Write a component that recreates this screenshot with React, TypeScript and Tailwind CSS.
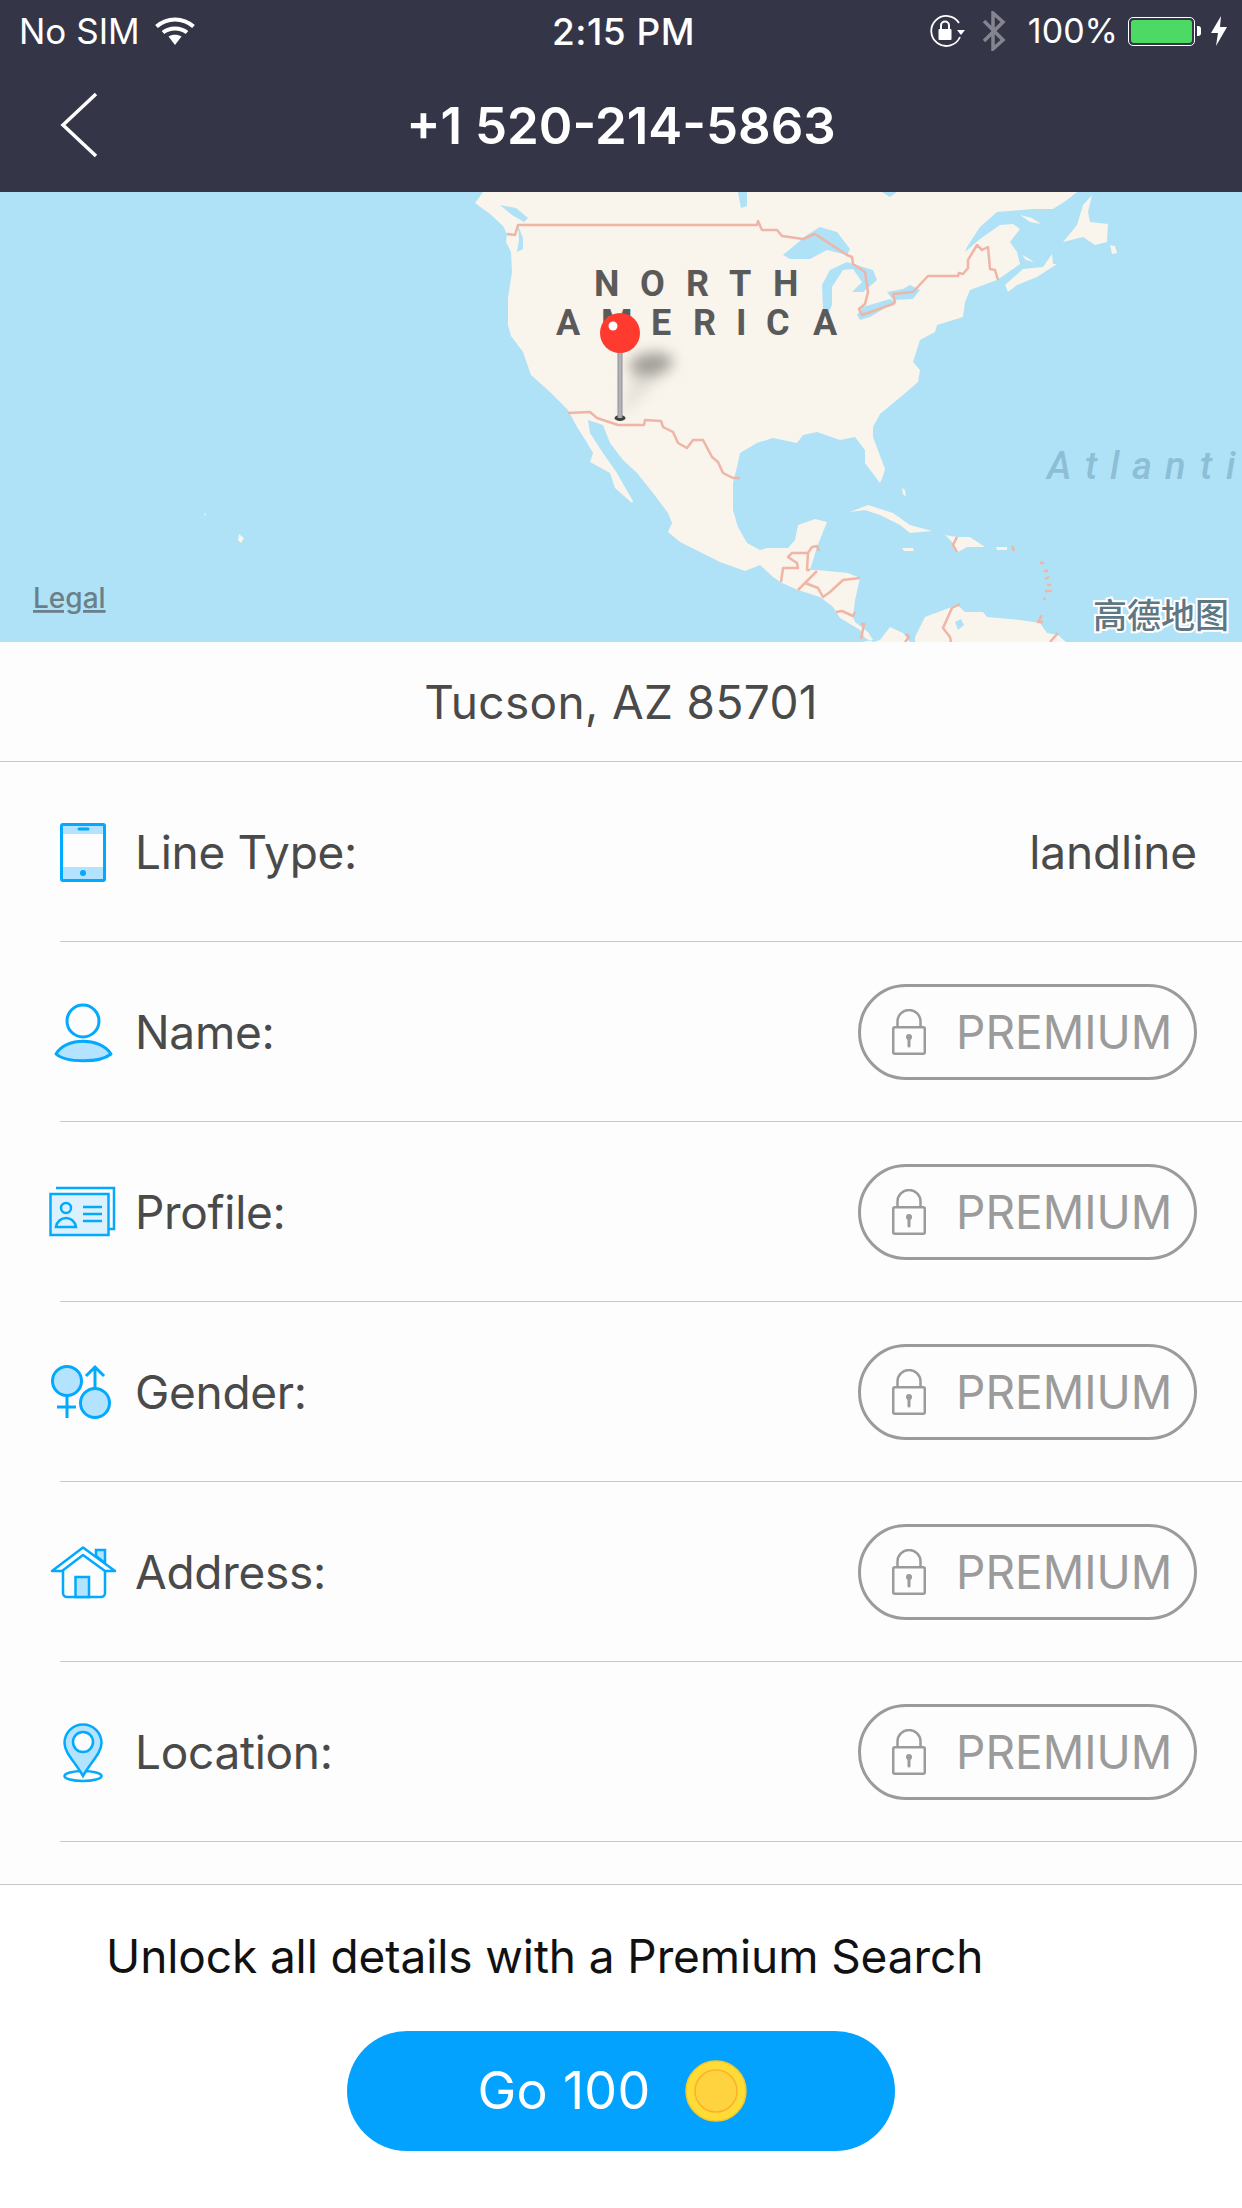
import React from 'react';

const BLUE = '#03a9fd';
const LIGHT = '#b3e3ff';

const land = [
  // mainland, clockwise from the north west
  '483,192 475,203 490,214 503,226 507,234 506,242 511,252 512,272 508,298 508,325 511,336 523,352 531,375 550,392 568,410 577,427 586,441 593,453 590,462 610,473 615,488 632,503 633,501 622,482 617,473 603,453 590,433 588,420 603,425 610,443 623,460 637,473 653,493 668,513 672,523 668,532 680,542 700,552 720,562 745,571 760,565 773,577 782,583 798,590 820,597 833,607 840,618 860,630 865,638 873,642 880,640 890,627 903,633 910,642 915,642 915,637 925,617 957,605 965,612 983,612 987,617 1020,620 1040,623 1047,633 1058,635 1066,642 1242,642 1242,660 760,660 873,640 868,632 855,622 853,617 855,600 860,578 848,573 817,570 810,570 817,547 827,522 815,519 798,525 795,540 788,548 767,548 760,550 747,543 738,527 733,510 733,483 737,467 740,453 757,443 773,438 797,443 803,435 817,432 840,440 855,437 865,450 865,463 880,483 883,476 885,469 873,437 873,427 880,414 903,395 918,382 920,370 913,362 920,340 935,332 937,325 963,317 965,302 970,290 997,280 1020,264 1017,252 1010,242 1020,229 1013,224 1000,225 980,239 965,252 967,247 980,227 997,212 1033,209 1053,209 1067,200 1077,192',
  // Nova Scotia
  '1008,292 1005,285 1023,269 1043,267 1052,254 1053,264 1057,264 1037,277 1017,285',
  '1022,255 1028,258 1034,262 1026,260',
  // Newfoundland and small islands
  '1063,242 1077,225 1083,205 1092,195 1088,212 1090,222 1108,224 1107,242 1095,245 1083,237',
  '1110,245 1115,246 1117,253 1112,254',
  '1020,215 1032,218 1041,224 1030,222',
  // Cuba, Hispaniola, Jamaica, Puerto Rico
  '850,512 868,505 893,513 910,525 932,531 910,533 900,525 880,515 865,510',
  '945,535 957,537 970,537 985,547 967,547 958,552 953,543',
  '902,548 913,548 914,551 904,551',
  '996,547 1007,547 1007,550 997,550',
  '902,488 905,490 906,497 903,494',
  // Hawaii
  '239,534 244,538 241,543 238,540',
  '204,513 206,514 205,516',
];

const lakes = [
  '783,255 807,235 820,227 837,232 850,249 847,255 827,250 810,259 790,259',
  '823,309 822,285 830,270 847,262 863,267 873,270 877,280 863,292 852,292 862,282 853,269 843,270 832,287 832,305 828,314',
  '857,315 863,307 890,299 895,302 870,317 860,320',
  '887,292 903,289 910,285 920,290 913,299 893,300',
  '738,192 747,192 747,206 741,208',
  '882,192 897,192 890,197',
  '518,225 523,238 523,249 517,252 519,240',
  '500,205 512,215 524,222 528,218 516,208',
  '955,622 961,619 964,625 958,630',
];

const borders = [
  '507,234 515,235 518,225 757,225 758,221 762,230 777,230 782,236 803,239 815,234 847,255 852,257 853,264 865,272 868,292 865,304 859,309 862,315 893,304 895,302 893,294 913,292 928,276 958,276 959,273 963,274 968,268 968,260 977,245 982,250 988,247 990,269 995,270 998,280',
  '568,413 590,412 597,418 618,425 644,425 645,420 661,421 663,427 673,432 678,443 687,448 693,440 703,440 712,457 718,462 723,473 733,478 740,478',
  '781,582 783,568 798,568 797,563 788,557 792,553 808,553 807,570 810,570',
  '808,553 812,547 817,546 819,551',
  '798,590 805,583 817,571',
  '805,583 818,588 823,597 830,592 843,580 860,578',
  '836,612 842,611 853,616 855,612',
  '861,624 864,624 861,639',
  '905,642 909,637 906,634',
  '960,604 952,608 943,628 950,637 951,642',
  '1042,615 1038,622 1043,622',
  '1050,642 1058,633',
  '957,537 953,545 957,552',
  '1012,546 1014,551',
  '1040,563 1044,563',
  '1044,571 1048,571',
  '1045,579 1049,577',
  '1047,585 1051,585',
  '1045,591 1052,591',
  '1043,599 1046,599',
];

function MapView() {
  return (
    <svg viewBox="0 192 1242 450" className="block h-[450px] w-full bg-[#afe2f7]">
      <defs>
        <filter id="pin-blur" x="-50%" y="-50%" width="200%" height="200%">
          <feGaussianBlur stdDeviation="7" />
        </filter>
        <linearGradient id="stick" x1="0" x2="1" y1="0" y2="0">
          <stop offset="0" stopColor="#8f9196" />
          <stop offset="0.5" stopColor="#b9bbc0" />
          <stop offset="1" stopColor="#8f9196" />
        </linearGradient>
      </defs>
      {land.map((p) => (
        <polygon key={p} points={p} fill="#f9f4ec" />
      ))}
      {lakes.map((p) => (
        <polygon key={p} points={p} fill="#afe2f7" />
      ))}
      {borders.map((p) => (
        <polyline key={p} points={p} fill="none" stroke="#efb5a6" strokeWidth="2.500" strokeLinejoin="round" />
      ))}

      <text
        x="594 640 686 729 773"
        y="296"
        fill="#5a5a5a"
        className="font-['Roboto',sans-serif] text-[36px] font-bold"
      >
        NORTH
      </text>
      <text
        x="556 601 651 693 736 766 813"
        y="335"
        fill="#5a5a5a"
        className="font-['Roboto',sans-serif] text-[36px] font-bold"
      >
        AMERICA
      </text>
      <text
        x="1047 1085 1110 1132 1165 1200 1226"
        y="479"
        fill="#8cbfd6"
        className="font-['Roboto',sans-serif] text-[38px] font-medium italic"
      >
        Atlanti
      </text>
      <text
        x="33"
        y="608"
        fill="#6b7f89"
        className="font-['Inter',sans-serif] text-[28px] font-medium underline"
      >
        Legal
      </text>
      <text
        x="1093"
        y="628"
        fill="#5e7785"
        stroke="#ffffff"
        strokeWidth="4"
        paintOrder="stroke"
        className="font-['Noto_Sans_CJK_SC',sans-serif] text-[34px] font-medium"
      >
        高德地图
      </text>

      <g filter="url(#pin-blur)">
        <ellipse cx="651" cy="364" rx="22" ry="11" fill="#a09e98" transform="rotate(-8 651 364)" />
        <polygon points="620,419 634,372 662,374" fill="#a09e98" opacity="0.25" />
      </g>
      <ellipse cx="620" cy="418" rx="5.5" ry="3" fill="#3f3f3f" />
      <rect x="617.5" y="350" width="5" height="68" fill="url(#stick)" />
      <circle cx="620" cy="333" r="20" fill="#ff3b30" />
      <circle cx="613" cy="326" r="4.5" fill="#ffffff" />
    </svg>
  );
}

function StatusBar() {
  return (
    <div className="grid h-[62px] grid-cols-3 items-center px-5 text-[34px] leading-none text-white">
      <div className="flex items-center gap-[15px] text-[35px]">
        <span className="-ml-[1px]">No SIM</span>
        <svg width="40" height="28" viewBox="0 0 40 28">
          <path d="M1.5 9.5C12 0 28 0 38.5 9.5" fill="none" stroke="#fff" strokeWidth="4" />
          <path d="M8 15.5C14.500 10 25.500 10 32 15.500" fill="none" stroke="#fff" strokeWidth="4" />
          <path d="M13.500 19.500C17 17 23 17 26.500 19.500L20 28Z" fill="#fff" />
        </svg>
      </div>
      <div className="-mr-[5px] text-center text-[37px] font-medium tracking-[0.5px]">2:15 PM</div>
      <div className="-mr-[5px] flex items-center justify-end">
        <svg width="36" height="32" viewBox="0 0 36 32">
          <path d="M31 22A15 15 0 1 1 30 8" fill="none" stroke="#fff" strokeWidth="1.800" />
          <path d="M28 15L36 15L32 20Z" fill="#fff" />
          <rect x="9.500" y="14" width="13" height="11" rx="1" fill="#fff" />
          <path d="M12 14V10.500A4 4 0 0 1 20 10.500V14" fill="none" stroke="#fff" strokeWidth="2" />
        </svg>
        <svg className="ml-[17px]" width="24" height="40" viewBox="0 0 24 40">
          <path d="M2 10L21 29L11 38V2L21 11L2 30" fill="none" stroke="#84858f" strokeWidth="3.500" />
        </svg>
        <span className="ml-[22px]">100%</span>
        <div className="ml-[10px] flex h-[29px] w-[67px] items-center rounded-[5px] border border-white p-[2px]">
          <div className="h-full w-full rounded-[3px] bg-[#4cd964]" />
        </div>
        <div className="ml-[2px] h-[10px] w-[4px] rounded-r-[3px] bg-white" />
        <svg className="ml-[10px]" width="16" height="30" viewBox="0 0 16 30">
          <path d="M10 0L0 17H7L5 30L16 11H9Z" fill="#fff" />
        </svg>
      </div>
    </div>
  );
}

function LockIcon() {
  return (
    <svg width="34" height="46" viewBox="0 0 34 46" fill="none" stroke="#9b9b9b" strokeWidth="2.500">
      <rect x="1.250" y="18.250" width="31.500" height="26.500" rx="1.500" />
      <path d="M5.500 18V12.500A11.500 11.500 0 0 1 28.500 12.500V18" />
      <circle cx="17" cy="28" r="3" fill="#9b9b9b" stroke="none" />
      <path d="M17 29V37" strokeWidth="3" strokeLinecap="round" />
    </svg>
  );
}

function PremiumPill() {
  return (
    <div className="flex h-[96px] w-[339px] items-center gap-[30px] rounded-full border-[3px] border-[#9b9b9b] pl-[31px]">
      <LockIcon />
      <span className="text-[46px] leading-none text-[#9b9b9b]">PREMIUM</span>
    </div>
  );
}

function TabletIcon() {
  return (
    <svg width="70" height="70" viewBox="47 816 70 70" fill="none" stroke={BLUE} strokeWidth="3">
      <rect x="62" y="823" width="42" height="10" fill={LIGHT} stroke="none" />
      <rect x="62" y="866" width="42" height="14" fill={LIGHT} stroke="none" />
      <rect x="61.500" y="823.500" width="43" height="56" rx="1.500" />
      <path d="M79 828H88" strokeLinecap="round" />
      <circle cx="83" cy="872" r="3" fill={BLUE} stroke="none" />
    </svg>
  );
}

function PersonIcon() {
  return (
    <svg width="70" height="70" viewBox="47 996 70 70" fill="none" stroke={BLUE} strokeWidth="3">
      <circle cx="83" cy="1020" r="16" />
      <path d="M56 1053C66 1036 100 1036 111 1053C100 1062 66 1062 56 1053Z" fill={LIGHT} strokeLinejoin="round" />
    </svg>
  );
}

function ProfileIcon() {
  return (
    <svg width="70" height="70" viewBox="47 1176 70 70" fill="none" stroke={BLUE} strokeWidth="2.500">
      <path d="M56 1187H114V1228H108" />
      <rect x="50.500" y="1193" width="58" height="41" fill={LIGHT} stroke="none" />
      <rect x="50.500" y="1193" width="58" height="41" fill="#fdfdfd" fillOpacity="0.55" />
      <circle cx="66" cy="1207" r="5" />
      <path d="M56 1226C58 1214 74 1214 76 1226Z" />
      <path d="M83 1206H102M83 1213H102M83 1220H102" />
    </svg>
  );
}

function GenderIcon() {
  return (
    <svg width="70" height="70" viewBox="47 1356 70 70" fill="none" stroke={BLUE} strokeWidth="3">
      <circle cx="67" cy="1380" r="14.500" fill={LIGHT} />
      <path d="M67 1395V1417M57 1406H76" />
      <circle cx="95" cy="1402" r="14.500" fill={LIGHT} />
      <path d="M95 1387V1367M86 1375L95 1366L104 1375" />
    </svg>
  );
}

function HouseIcon() {
  return (
    <svg width="70" height="70" viewBox="47 1536 70 70" fill="none" stroke={BLUE} strokeWidth="2.500">
      <path d="M96 1549H105V1562L96 1555Z" fill={LIGHT} />
      <path d="M52 1570L83 1546.500L115 1570H105L83 1554L62 1570Z" fill="#fdfdfd" strokeLinejoin="round" />
      <path d="M63 1569V1592A4 4 0 0 0 67 1596H101A4 4 0 0 0 105 1592V1569" />
      <rect x="75.500" y="1576" width="13.500" height="20" fill={LIGHT} />
    </svg>
  );
}

function LocationIcon() {
  return (
    <svg width="70" height="70" viewBox="47 1716 70 70" fill="none" stroke={BLUE} strokeWidth="2.500">
      <ellipse cx="83" cy="1775" rx="18.500" ry="5" />
      <path d="M83 1775C76 1762 64.500 1752 64.500 1742A18.500 18.500 0 0 1 101.500 1742C101.500 1752 90 1762 83 1775Z" fill={LIGHT} />
      <circle cx="83" cy="1741" r="10" fill="#fdfdfd" />
    </svg>
  );
}

const rows = [
  { label: 'Line Type:', icon: TabletIcon, value: 'landline' },
  { label: 'Name:', icon: PersonIcon },
  { label: 'Profile:', icon: ProfileIcon },
  { label: 'Gender:', icon: GenderIcon },
  { label: 'Address:', icon: HouseIcon },
  { label: 'Location:', icon: LocationIcon },
];

export default function App() {
  return (
    <div className="h-[2208px] w-[1242px] overflow-hidden bg-white font-['Inter',sans-serif]">
      <div className="h-[192px] bg-[#343648]">
        <StatusBar />
        <div className="relative flex h-[130px] items-center justify-center pb-[3px] text-[51px] font-semibold leading-none text-white">
          <svg className="absolute left-[60px] top-[30px]" width="38" height="66" viewBox="0 0 38 66" fill="none" stroke="#fff" strokeWidth="3.500">
            <path d="M36 2L3 33L36 64" />
          </svg>
          <span>+1 520-214-5863</span>
        </div>
      </div>

      <MapView />

      <div className="bg-[#fdfdfd] pb-[42px] text-[46px] leading-none text-[#4a4a4a]">
        <div className="flex h-[120px] items-center justify-center border-b border-[#c8c8c8] tracking-[0.35px]">
          Tucson, AZ 85701
        </div>
        {rows.map(({ label, icon: Icon, value }) => (
          <div key={label} className="ml-[60px] flex h-[180px] items-center border-b-[1px] border-[#c8c8c8] pr-[45px]">
            <div className="-ml-[13px] w-[70px] shrink-0">
              <Icon />
            </div>
            <span className="ml-[18px] tracking-[-0.3px]">{label}</span>
            <div className="ml-auto">{value ? <span className="tracking-[-0.1px]">{value}</span> : <PremiumPill />}</div>
          </div>
        ))}
      </div>

      <div className="border-t border-[#c8c8c8] bg-white">
        <div className="pl-[106px] pt-[48px] text-[46px] leading-[46px] tracking-[-0.1px] text-[#111111]">
          Unlock all details with a Premium Search
        </div>
        <div className="mx-auto mt-[52px] flex h-[120px] w-[548px] items-center justify-center gap-[34px] rounded-full bg-[#03a2fe] pr-[18px] text-[52px] leading-none tracking-[0.3px] text-white">
          <span>Go 100</span>
          <svg width="62" height="62" viewBox="0 0 62 62">
            <circle cx="31" cy="31" r="30" fill="#ffdc35" stroke="#f5c72c" strokeWidth="1.500" />
            <circle cx="31" cy="31" r="21" fill="#ffd23f" stroke="#fbb12c" strokeWidth="1.500" />
          </svg>
        </div>
      </div>
    </div>
  );
}
